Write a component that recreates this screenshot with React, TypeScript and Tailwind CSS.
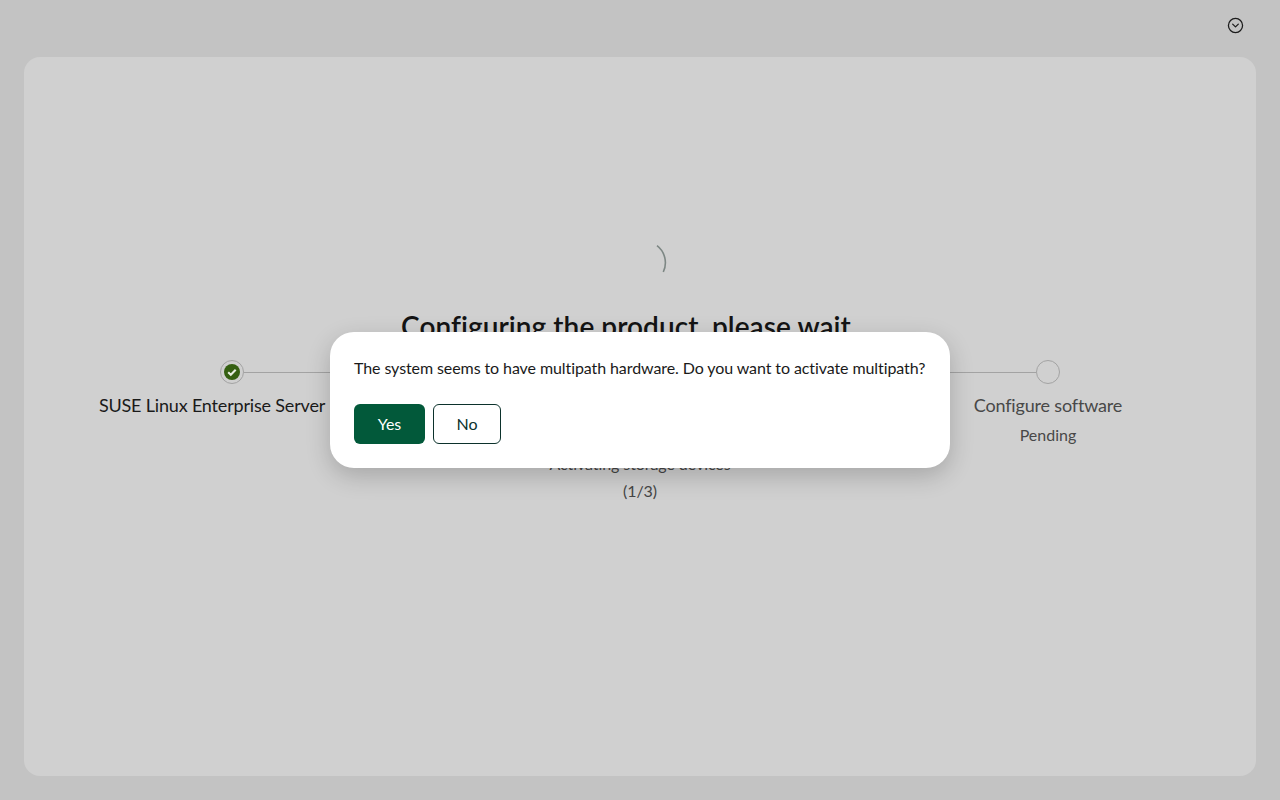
import React from "react";
import { CircleChevronDown } from "lucide-react";

const font = { fontFamily: 'Lato, "Noto Sans", sans-serif' };

const App: React.FC = () => {
  return (
    <div className="relative h-[800px] w-[1280px] overflow-hidden bg-[#c3c3c3] text-[#1a1a1a]" style={font}>
      <header className="flex h-[57px] justify-end pr-[36px] pt-[17px]">
        <CircleChevronDown size={17} strokeWidth={1.8} className="text-[#1c1c1c]" />
      </header>

      <main className="mx-6 flex h-[719px] flex-col items-center rounded-2xl bg-[#d0d0d0] px-1 pt-[181px]">
        <svg width="48" height="48" viewBox="0 0 48 48" fill="none" className="shrink-0 overflow-visible">
          <path d="M41 7.7A21.5 21.5 0 0 1 47.3 34" stroke="#7d8784" strokeWidth="1.6" />
        </svg>

        <h1 className="mr-7 mt-[23px] whitespace-nowrap text-[28px] font-semibold leading-[35px] tracking-[0.05px] text-[#141414]">
          Configuring the product, please wait
        </h1>

        <div className="mt-4 grid w-full grid-cols-3">
          {/* step 1 */}
          <div className="flex flex-col items-center">
            <div className="flex h-6 w-full items-center">
              <div className="flex-1" />
              <div className="flex h-6 w-6 items-center justify-center rounded-full border border-[#a3a3a3]">
                <svg width="16" height="16" viewBox="0 0 16 16" fill="none">
                  <circle cx="8" cy="8" r="8" fill="#356012" />
                  <path d="M4.2 8.2l2.6 2.5 4.9-5" stroke="#e8eee2" strokeWidth="2.1" />
                </svg>
              </div>
              <div className="h-px flex-1 bg-[#a3a3a3]" />
            </div>
            <div className="mr-10 mt-[9px] whitespace-nowrap text-lg leading-6 tracking-[-0.18px]">SUSE Linux Enterprise Server</div>
          </div>

          {/* step 2, its header sits behind the dialog */}
          <div className="flex flex-col items-center">
            <div className="flex h-6 w-full items-center">
              <div className="h-px flex-1 bg-[#a3a3a3]" />
              <div className="h-6 w-6 rounded-full border border-[#a3a3a3]" />
              <div className="h-px flex-1 bg-[#a3a3a3]" />
            </div>
            <div className="mt-[66px] text-center text-base leading-[27px] tracking-[-0.07px] text-[#454545]">
              <div>Activating storage devices</div>
              <div>(1/3)</div>
            </div>
          </div>

          {/* step 3 */}
          <div className="flex flex-col items-center">
            <div className="flex h-6 w-full items-center">
              <div className="h-px flex-1 bg-[#a3a3a3]" />
              <div className="h-6 w-6 rounded-full border border-[#a3a3a3]" />
              <div className="flex-1" />
            </div>
            <div className="mt-[9px] whitespace-nowrap text-lg leading-6 tracking-[-0.17px] text-[#484848]">Configure software</div>
            <div className="mt-1.5 text-base leading-6 text-[#484848]">Pending</div>
          </div>
        </div>
      </main>

      <div className="absolute inset-0 flex items-center justify-center">
        <div className="h-[136px] w-[620px] rounded-3xl bg-white p-6 shadow-[0_8px_24px_rgba(0,0,0,0.2)]">
          <p className="whitespace-nowrap text-base leading-6 tracking-[-0.09px] text-[#1a1a1a]">
            The system seems to have multipath hardware. Do you want to activate multipath?
          </p>
          <div className="mt-6 flex gap-2">
            <button className="h-10 w-[71px] rounded-md bg-[#02593a] text-base text-white">Yes</button>
            <button className="h-10 w-[68px] rounded-md border border-[#0c322c] bg-white text-base text-[#0c322c]">No</button>
          </div>
        </div>
      </div>
    </div>
  );
};

export default App;
